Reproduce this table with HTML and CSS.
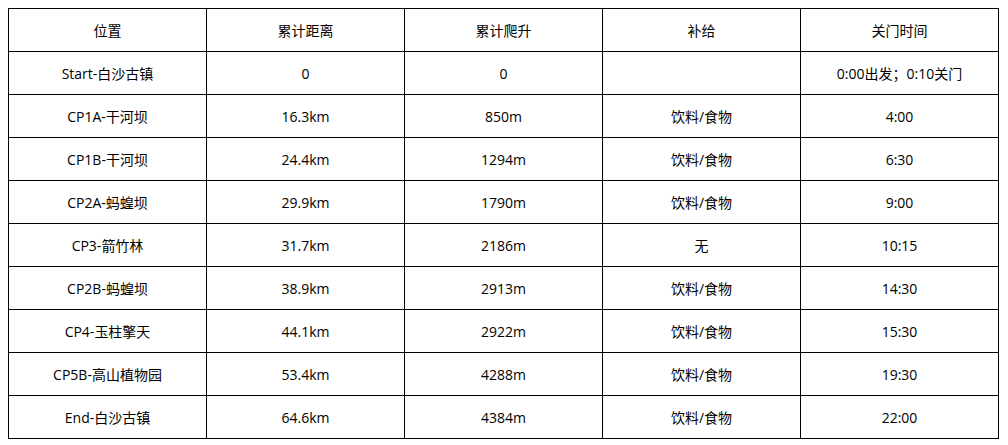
FILE: index.html
```html
<!DOCTYPE html>
<html><head><meta charset="utf-8"><link rel="stylesheet" href="styles.css"></head>
<body>
<table class="tbl">
<tr><td>位置</td><td>累计距离</td><td>累计爬升</td><td>补给</td><td>关门时间</td></tr>
<tr><td>Start-白沙古镇</td><td>0</td><td>0</td><td></td><td>0:00出发；0:10关门</td></tr>
<tr><td>CP1A-干河坝</td><td>16.3km</td><td>850m</td><td>饮料/食物</td><td>4:00</td></tr>
<tr><td>CP1B-干河坝</td><td>24.4km</td><td>1294m</td><td>饮料/食物</td><td>6:30</td></tr>
<tr><td>CP2A-蚂蝗坝</td><td>29.9km</td><td>1790m</td><td>饮料/食物</td><td>9:00</td></tr>
<tr><td>CP3-箭竹林</td><td>31.7km</td><td>2186m</td><td>无</td><td>10:15</td></tr>
<tr><td>CP2B-蚂蝗坝</td><td>38.9km</td><td>2913m</td><td>饮料/食物</td><td>14:30</td></tr>
<tr><td>CP4-玉柱擎天</td><td>44.1km</td><td>2922m</td><td>饮料/食物</td><td>15:30</td></tr>
<tr><td>CP5B-高山植物园</td><td>53.4km</td><td>4288m</td><td>饮料/食物</td><td>19:30</td></tr>
<tr><td>End-白沙古镇</td><td>64.6km</td><td>4384m</td><td>饮料/食物</td><td>22:00</td></tr>
</table>
</body></html>
```
FILE: styles.css
```css
body{margin:8px;background:#fff;color:#000;font-family:"Open Sans","Noto Sans CJK SC",sans-serif;font-size:14px;}
.tbl{border-collapse:collapse;width:991px;table-layout:fixed;}
.tbl td{border:1px solid #000;height:43px;padding:0;text-align:center;vertical-align:middle;box-sizing:border-box;}
```
